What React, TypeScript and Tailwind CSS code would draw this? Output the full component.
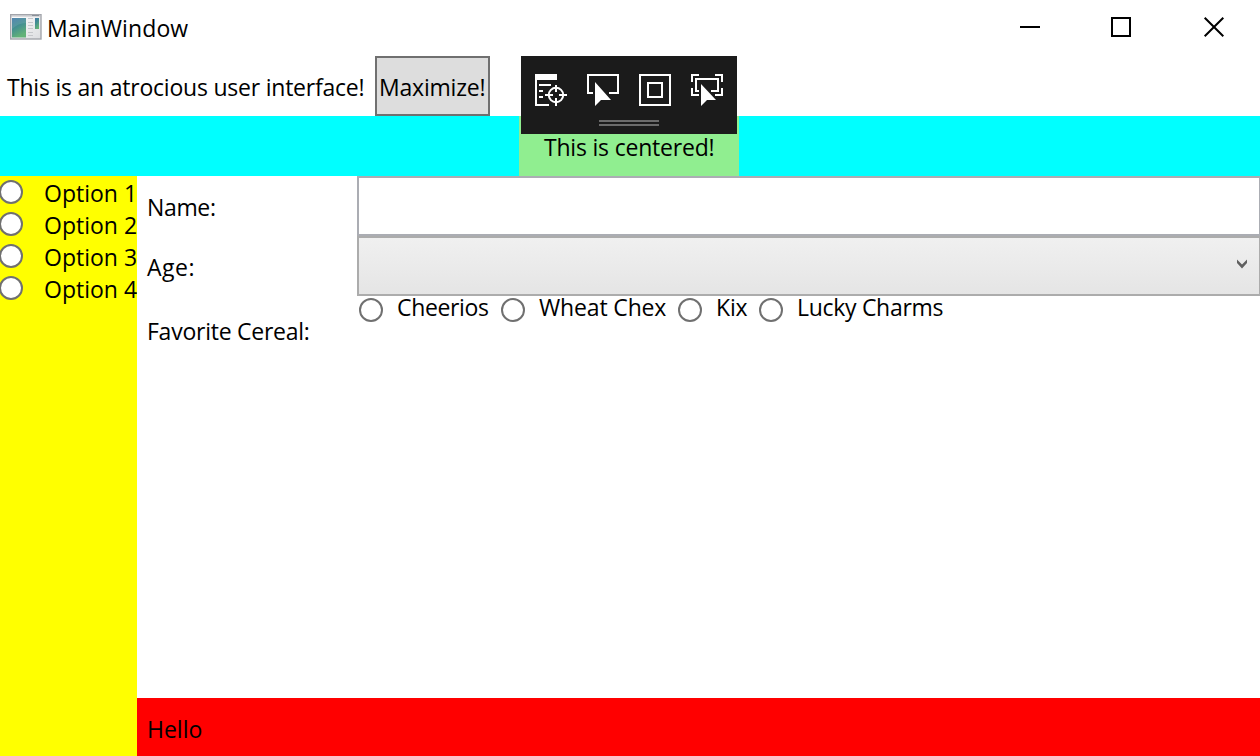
import React from "react";

function Text({ children, className = "" }: { children: React.ReactNode; className?: string }) {
  return <span className={`block whitespace-nowrap leading-8 ${className}`}>{children}</span>;
}

function Radio() {
  return <span className="block size-6 shrink-0 rounded-full border-2 border-[#707070] bg-white" />;
}

function AppIcon() {
  return (
    <svg className="h-[26px] w-8 shrink-0" viewBox="0 0 32 26">
      <defs>
        <linearGradient id="pane" x1="0" y1="0" x2="0.4" y2="1">
          <stop offset="0" stopColor="#3f78a8" />
          <stop offset="0.5" stopColor="#438f91" />
          <stop offset="1" stopColor="#62b277" />
        </linearGradient>
        <linearGradient id="frame" x1="0" y1="0" x2="1" y2="1">
          <stop offset="0" stopColor="#ffffff" />
          <stop offset="1" stopColor="#dcdde0" />
        </linearGradient>
      </defs>
      <rect x="0.7" y="0.7" width="30.3" height="24.3" fill="url(#frame)" stroke="#a3a5ab" strokeWidth="1.4" />
      <path d="M1 2h30" stroke="#b9bbc0" strokeWidth="1" />
      <path d="M22 1.5h7" stroke="#8a9099" strokeWidth="1" />
      <rect x="2" y="4" width="14" height="19.500" fill="url(#pane)" />
      <path d="M2 15C6 11 11 9 16 9V4H2z" fill="#ffffff" opacity="0.1" />
      <path d="M18 4.500h5M18 8.500h5M18 11.500h5M18 14.500h5M18 18.500h5M18 21.500h5" stroke="#c5c7cb" />
      <rect x="25" y="4" width="4" height="11" fill="url(#pane)" />
    </svg>
  );
}

function DebugToolbar() {
  return (
    <div className="absolute left-[521px] top-14 h-[78px] w-[216px] bg-[#1b1b1b]">
      <svg className="block h-full w-full" viewBox="521 56 216 78" fill="none" stroke="#fff" strokeWidth="2">
        <rect x="535" y="74" width="22" height="6" fill="#fff" stroke="none" />
        <path d="M536 79v26h13M539 85h12M539 91h4M539 97h4" />
        <circle cx="556" cy="95" r="7.200" />
        <path d="M556 85v7M556 98v8M545 95h8M559 95h8" />
        <path d="M593 93h-5v-18h30v18h-9" />
        <path d="M595 82v24l6-6h10z" fill="#fff" stroke="none" />
        <rect x="640" y="75" width="30" height="30" />
        <rect x="648" y="83" width="14" height="14" />
        <path d="M692 82v-7h7M715 75h7v7M722 88v7h-7M699 95h-7v-7" />
        <path d="M699 91h-3v-12h22v12h-7" />
        <path d="M701 84v22l6-6h9z" fill="#fff" stroke="none" />
        <path d="M599 121h60M599 125h60" stroke="#6b6b6b" />
      </svg>
    </div>
  );
}

const options = ["Option 1", "Option 2", "Option 3", "Option 4"];

export default function App() {
  return (
    <div className="relative flex h-[756px] w-[1260px] flex-col overflow-hidden bg-white font-['Open_Sans','Noto_Sans',sans-serif] text-[23px] text-black">
      <header className="flex h-14 shrink-0 items-start">
        <div className="flex pl-[10px] pt-[14px]">
          <AppIcon />
          <Text className="-mt-[2px] ml-[5px] tracking-[0.1px]">MainWindow</Text>
        </div>
        <svg className="ml-auto h-14 w-[260px] shrink-0" viewBox="1000 0 260 56" fill="none" stroke="#000" strokeWidth="2">
          <path d="M1020 27h20" />
          <rect x="1112" y="18" width="18" height="18" />
          <path d="M1204.700 17.700l18.600 18.600M1223.300 17.700l-18.600 18.600" />
        </svg>
      </header>
      <div className="flex h-[60px] shrink-0">
        <div className="w-[375px] shrink-0 pl-[7px] pt-[15px]">
          <Text className="tracking-[-0.22px]">This is an atrocious user interface!</Text>
        </div>
        <button className="flex h-[60px] w-[115px] items-start border-2 border-[#707070] bg-[#ddd] pl-0.5 pt-[13px] text-left">
          <Text className="tracking-[-0.2px]">Maximize!</Text>
        </button>
      </div>
      <div className="flex h-[60px] shrink-0 bg-[#00ffff] pl-[519px]">
        <div className="w-[220px] bg-[#90ee90] pl-[25px] pt-[15px]">
          <Text className="tracking-[-0.2px]">This is centered!</Text>
        </div>
      </div>
      <div className="flex min-h-0 flex-1">
        <aside className="w-[137px] shrink-0 overflow-hidden bg-[#ffff00]">
          {options.map((label) => (
            <div key={label} className="flex h-8">
              <div className="-ml-px pt-1">
                <Radio />
              </div>
              <Text className="ml-[21px] mt-px">{label}</Text>
            </div>
          ))}
        </aside>
        <main className="flex min-w-0 flex-1 flex-col">
          <div className="flex h-[60px] shrink-0">
            <div className="w-[220px] shrink-0 pl-[10px] pt-[15px]">
              <Text className="tracking-[-0.35px]">Name:</Text>
            </div>
            <input className="h-full min-w-0 flex-1 border-2 border-r border-[#abadb3] bg-white outline-none" />
          </div>
          <div className="flex h-[60px] shrink-0">
            <div className="w-[220px] shrink-0 pl-[10px] pt-[15px]">
              <Text className="tracking-[0.5px]">Age:</Text>
            </div>
            <div className="flex flex-1 justify-end border-2 border-r border-[#acacac] bg-linear-to-b from-[#f0f0f0] to-[#e5e5e5] pr-3 pt-[21px]">
              <svg className="h-[10px] w-[10px]" viewBox="0 0 10 10">
                <path d="M0 0.500L5 5.500L10 0.500V4L5 9.500L0 4z" fill="#606060" />
              </svg>
            </div>
          </div>
          <div className="flex flex-1">
            <div className="w-[220px] shrink-0 pl-[10px] pt-[19px]">
              <Text className="tracking-[-0.25px]">Favorite Cereal:</Text>
            </div>
            <div className="flex pl-0.5">
              <div className="flex w-[142px]">
                <div className="pt-0.5"><Radio /></div>
                <Text className="-mt-[5px] ml-[14px] tracking-[-0.35px]">Cheerios</Text>
              </div>
              <div className="flex w-[177px]">
                <div className="pt-0.5"><Radio /></div>
                <Text className="-mt-[5px] ml-[14px] tracking-[-0.15px]">Wheat Chex</Text>
              </div>
              <div className="flex w-[81px]">
                <div className="pt-0.5"><Radio /></div>
                <Text className="-mt-[5px] ml-[14px] tracking-[-0.2px]">Kix</Text>
              </div>
              <div className="flex">
                <div className="pt-0.5"><Radio /></div>
                <Text className="-mt-[5px] ml-[14px] tracking-[-0.3px]">Lucky Charms</Text>
              </div>
            </div>
          </div>
          <footer className="h-[58px] shrink-0 bg-[#ff0000] pl-[10px] pt-[15px]">
            <Text className="tracking-[0px]">Hello</Text>
          </footer>
        </main>
      </div>
      <DebugToolbar />
    </div>
  );
}
